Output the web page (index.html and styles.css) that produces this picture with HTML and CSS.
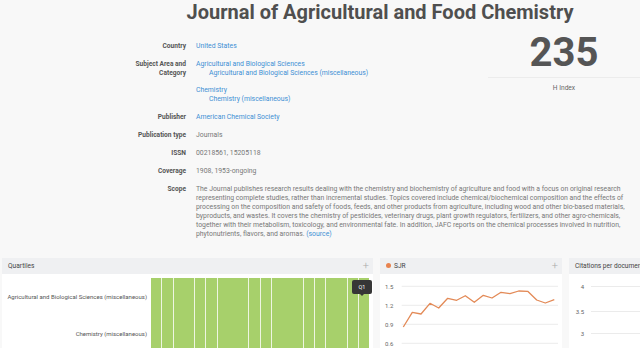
FILE: index.html
```html
<!DOCTYPE html>
<html lang="en">
<head>
    <meta charset="UTF-8">
    <title>Journal of Agricultural and Food Chemistry</title>
    <link rel="stylesheet" href="styles.css">
</head>
<body>
    <h1 class="title">Journal of Agricultural and Food Chemistry</h1>

    <div class="info">
        <div class="hindex">
            <div class="hindex-num">235</div>
            <div class="hindex-label">H Index</div>
        </div>

        <div class="row">
            <div class="label">Country</div>
            <div class="value"><a href="#">United States</a></div>
        </div>
        <div class="row">
            <div class="label">Subject Area and Category</div>
            <div class="value">
                <div class="group">
                    <a href="#">Agricultural and Biological Sciences</a>
                    <a href="#" class="sub">Agricultural and Biological Sciences (miscellaneous)</a>
                </div>
                <div class="group">
                    <a href="#">Chemistry</a>
                    <a href="#" class="sub">Chemistry (miscellaneous)</a>
                </div>
            </div>
        </div>
        <div class="row">
            <div class="label">Publisher</div>
            <div class="value"><a href="#">American Chemical Society</a></div>
        </div>
        <div class="row">
            <div class="label">Publication type</div>
            <div class="value">Journals</div>
        </div>
        <div class="row">
            <div class="label">ISSN</div>
            <div class="value">00218561, 15205118</div>
        </div>
        <div class="row">
            <div class="label">Coverage</div>
            <div class="value">1908, 1953-ongoing</div>
        </div>
        <div class="row">
            <div class="label">Scope</div>
            <div class="value scope">The Journal publishes research results dealing with the chemistry and biochemistry of agriculture and food with a focus on original research representing complete studies, rather than incremental studies. Topics covered include chemical/biochemical composition and the effects of processing on the composition and safety of foods, feeds, and other products from agriculture, including wood and other bio-based materials, byproducts, and wastes. It covers the chemistry of pesticides, veterinary drugs, plant growth regulators, fertilizers, and other agro-chemicals, together with their metabolism, toxicology, and environmental fate. In addition, JAFC reports on the chemical processes involved in nutrition, phytonutrients, flavors, and aromas. <a href="#">(source)</a></div>
        </div>
    </div>

    <div class="panels">
        <div class="panel quartiles">
            <div class="panel-head"><span>Quartiles</span><span class="plus">+</span></div>
            <div class="quart-body">
                <div class="quart-labels">
                    <div>Agricultural and Biological Sciences (miscellaneous)</div>
                    <div>Chemistry (miscellaneous)</div>
                </div>
                <div class="quart-chart">
                    <div class="seg" style="flex-grow:1"></div>
                    <div class="seg" style="flex-grow:1"></div>
                    <div class="seg" style="flex-grow:2"></div>
                    <div class="seg" style="flex-grow:1"></div>
                    <div class="seg" style="flex-grow:1"></div>
                    <div class="seg" style="flex-grow:3"></div>
                    <div class="seg" style="flex-grow:1"></div>
                    <div class="seg" style="flex-grow:1"></div>
                    <div class="seg" style="flex-grow:3"></div>
                    <div class="seg" style="flex-grow:1"></div>
                    <div class="seg" style="flex-grow:1"></div>
                    <div class="seg" style="flex-grow:2"></div>
                    <div class="seg" style="flex-grow:1"></div>
                    <div class="seg" style="flex-grow:1"></div>
                    <div class="tip">Q1</div>
                </div>
            </div>
        </div>

        <div class="panel sjr">
            <div class="panel-head"><span><i class="dot"></i>SJR</span><span class="plus">+</span></div>
            <svg class="chart" width="182" height="75" viewBox="0 0 182 75">
                <g stroke="#e6e6e6" stroke-width="0.8">
                    <line x1="21.7" y1="12.3" x2="178" y2="12.3"/>
                    <line x1="21.7" y1="31.3" x2="178" y2="31.3"/>
                    <line x1="21.7" y1="50.3" x2="178" y2="50.3"/>
                    <line x1="21.7" y1="69.3" x2="178" y2="69.3"/>
                </g>
                <g class="axis">
                    <text x="5" y="14.5">1.5</text>
                    <text x="5" y="33.5">1.2</text>
                    <text x="5" y="52.5">0.9</text>
                    <text x="5" y="71.5">0.6</text>
                </g>
                <polyline fill="none" stroke="#e38a57" stroke-width="1.3" stroke-linejoin="round"
                    points="23.3,53 32.3,38.3 41,40 50,29.3 58.7,34 67.7,24.3 76.7,26.3 85.3,21.7 94.3,28.3 103.3,21.3 112,24 121,18.3 130,19.7 138.7,17 147.7,17.3 156.7,26 165.3,29 174.3,25.7"/>
            </svg>
        </div>

        <div class="panel cites">
            <div class="panel-head"><span>Citations per document</span></div>
            <svg class="chart" width="90" height="75" viewBox="0 0 90 75">
                <g stroke="#e6e6e6" stroke-width="0.8">
                    <line x1="22" y1="12.5" x2="90" y2="12.5"/>
                    <line x1="22" y1="37.5" x2="90" y2="37.5"/>
                    <line x1="22" y1="59.5" x2="90" y2="59.5"/>
                </g>
                <g class="axis" text-anchor="end">
                    <text x="15" y="14.7">4</text>
                    <text x="15" y="39.7">3.5</text>
                    <text x="15" y="61.7">3</text>
                </g>
            </svg>
        </div>
    </div>
</body>
</html>
```

FILE: styles.css
```css
body {
    margin: 0;
    width: 640px;
    height: 348px;
    overflow: hidden;
    background-color: #f8f8f8;
    font-family: Roboto, "Liberation Sans", sans-serif;
    color: #777;
}
a {
    color: #3d8fd4;
    text-decoration: none;
}
.title {
    margin: 0;
    padding-left: 120px;
    height: 38px;
    line-height: 25px;
    font-size: 20px;
    font-weight: 700;
    color: #4f4f4f;
    text-align: center;
}
.info {
    padding-top: 3.5px;
    height: 216px;
    font-size: 6.6px;
    line-height: 9px;
}
.hindex {
    float: right;
    width: 152px;
    margin-top: -3.5px;
    text-align: center;
}
.hindex-num {
    font-size: 40px;
    line-height: 30px;
    font-weight: 700;
    color: #555;
    padding-bottom: 9px;
    border-bottom: 1px solid #ececec;
}
.hindex-label {
    margin-top: 6px;
    color: #666;
}
.row {
    display: grid;
    grid-template-columns: 186px 442px;
    column-gap: 10px;
    padding-bottom: 9px;
}
.label {
    text-align: right;
    font-weight: 700;
    color: #555;
    padding-left: 120px;
}
.value {
    font-size: 6.85px;
}
.value a {
    display: block;
}
.value .sub {
    padding-left: 13px;
}
.group + .group {
    margin-top: 8px;
}
.scope a {
    display: inline;
}
.panels {
    display: flex;
    gap: 7px;
    padding-left: 2px;
    font-size: 6.6px;
}
.panel {
    background-color: #fff;
    height: 91px;
    flex-shrink: 0;
}
.quartiles {
    width: 371px;
}
.sjr {
    width: 182px;
}
.cites {
    width: 90px;
}
.panel-head {
    display: flex;
    justify-content: space-between;
    align-items: center;
    height: 16px;
    padding: 0 4px 0 6px;
    background-color: #eff0f2;
    color: #444;
    white-space: nowrap;
    overflow: hidden;
}
.plus {
    font-size: 11px;
    color: #aaa;
    font-weight: 300;
}
.dot {
    display: inline-block;
    width: 5px;
    height: 5px;
    border-radius: 50%;
    background-color: #e8834f;
    margin-right: 3px;
    vertical-align: -0.5px;
}
.quart-body {
    display: flex;
    padding-top: 4px;
}
.quart-labels {
    width: 145px;
    padding-right: 4px;
    text-align: right;
    font-size: 6px;
    color: #555;
}
.quart-labels div {
    height: 37px;
    line-height: 37px;
    white-space: nowrap;
}
.quart-chart {
    position: relative;
    display: flex;
    width: 218px;
    height: 74px;
}
.seg {
    flex-basis: 0;
    background-color: #a7d06b;
    border-left: 1px solid #eef5e2;
}
.seg:first-child {
    border-left: none;
}
.tip {
    position: absolute;
    left: 201px;
    top: 2px;
    width: 20px;
    height: 14px;
    line-height: 14px;
    border-radius: 2px;
    background-color: #363636;
    color: #fff;
    font-size: 5.5px;
    text-align: center;
}
.tip::after {
    content: "";
    position: absolute;
    left: 8px;
    bottom: -2px;
    border-left: 2px solid transparent;
    border-right: 2px solid transparent;
    border-top: 2px solid #363636;
}
.chart {
    display: block;
}
.axis {
    font-size: 6px;
    fill: #666;
}
```
